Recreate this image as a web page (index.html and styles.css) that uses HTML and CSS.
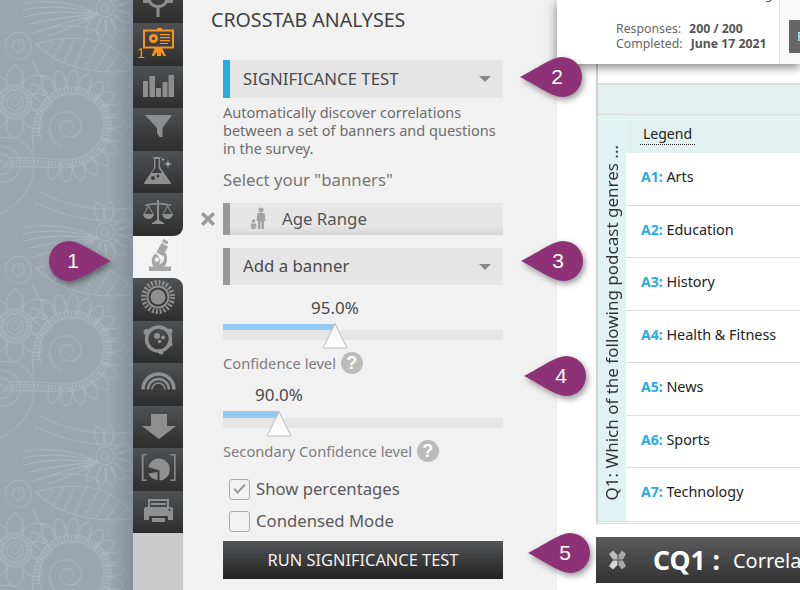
FILE: index.html
```html
<!DOCTYPE html>
<html lang="en">
<head>
<meta charset="utf-8">
<title>Crosstab Analyses</title>
<link rel="stylesheet" href="styles.css">
</head>
<body>
<div class="page">
  <div class="backdrop">
    <svg class="pattern" width="133" height="590" xmlns="http://www.w3.org/2000/svg">
      <defs>
        <path id="pa" d="M-6 -17C-11 -24 -8 -32 0 -37C8 -32 11 -24 6 -17"/>
        <path id="pb" d="M-4.500 -37C-7 -46 -5 -54 0 -56C5 -54 7 -46 4.500 -37"/>
        <path id="pc" d="M-3 -11C-6 -18 -5 -27 0 -31C5 -27 6 -18 3 -11"/>
        <g id="art" fill="none" stroke="#aab4bc" stroke-width="1.100">
          <g transform="translate(15 102)">
            <circle r="4"/><circle r="8"/><circle r="12"/><circle r="14.500" stroke-width="4" stroke-dasharray="1.300 2"/><circle r="17"/>
            <use href="#pa"/><use href="#pa" transform="rotate(45)"/><use href="#pa" transform="rotate(90)"/><use href="#pa" transform="rotate(135)"/>
            <use href="#pa" transform="rotate(180)"/><use href="#pa" transform="rotate(225)"/><use href="#pa" transform="rotate(270)"/><use href="#pa" transform="rotate(315)"/>
          </g>
          <g transform="translate(68 126)">
            <path d="M5 3C8 -3 0 -8 -5 -4C-11 1 -7 11 2 11C12 11 16 0 11 -8C5 -17 -10 -16 -16 -7C-22 3 -17 17 -5 21"/>
            <path d="M-26 16C-34 -4 -24 -28 0 -32C22 -35 37 -18 36 0C35 20 16 36 -6 34C-22 33 -40 30 -60 32"/>
            <path d="M-34 26C-40 -6 -24 -38 2 -39C28 -40 44 -20 43 1C42 26 18 43 -8 42C-24 41 -44 40 -66 41"/>
            <path d="M-30 10C-34 -12 -18 -34 1 -35.500C25 -37 41 -19 39.500 1C38 23 17 40 -7 38C-24 37 -42 35 -62 36.500" stroke-width="5" stroke-dasharray="1.300 2.200"/>
            <use href="#pb" transform="rotate(-42)"/><use href="#pb" transform="rotate(-26)"/><use href="#pb" transform="rotate(-10)"/><use href="#pb" transform="rotate(6)"/>
            <use href="#pb" transform="rotate(22)"/><use href="#pb" transform="rotate(38)"/><use href="#pb" transform="rotate(54)"/><use href="#pb" transform="rotate(70)"/>
            <use href="#pb" transform="rotate(86)"/><use href="#pb" transform="rotate(102)"/><use href="#pb" transform="rotate(118)"/><use href="#pb" transform="rotate(134)"/>
            <use href="#pb" transform="rotate(150)"/><use href="#pb" transform="rotate(166)"/><use href="#pb" transform="rotate(182)"/><use href="#pb" transform="rotate(198)"/>
          </g>
          <g transform="translate(105 8)">
            <circle r="4"/><circle r="9"/>
            <use href="#pc" transform="rotate(40)"/><use href="#pc" transform="rotate(65)"/><use href="#pc" transform="rotate(90)"/><use href="#pc" transform="rotate(115)"/>
            <use href="#pc" transform="rotate(140)"/><use href="#pc" transform="rotate(165)"/><use href="#pc" transform="rotate(190)"/><use href="#pc" transform="rotate(215)"/>
            <use href="#pc" transform="rotate(-15)"/><use href="#pc" transform="rotate(10)"/>
          </g>
          <path d="M99 14C78 4 50 -2 24 4M99 14C78 8 50 4 22 10M99 14C76 12 50 10 24 17M99 14C76 16 52 18 30 24M99 14C78 20 56 24 38 32M99 14C80 24 62 32 46 36"/>
          <path d="M99 14L88 10L90 16L84 20Z" fill="#aab4bc" fill-opacity=".5"/>
          <path d="M36 44C60 36 92 36 110 46C124 54 132 62 137 70C112 74 84 72 62 62C52 58 44 52 36 44Z"/>
          <path d="M46 52L54 41M54 57L64 38M64 62L76 37M74 66L88 37M84 69L100 40M95 71L110 46M106 72L120 52M116 72L128 60"/>
          <path d="M27 36C34 43 33 56 22 59C11 61 3 52 6 42C9 32 21 29 27 36ZM20 38C26 41 26 51 19 52C12 52 10 43 16 40C20 38 22 44 18 46"/>
          <path d="M32 34C54 24 84 22 100 34M33 60C36 70 38 74 47 80"/>
          <path d="M-1 146C14 146 22 156 20 168C18 178 8 184 -1 182M-1 154C8 153 13 160 12 167C11 172 5 175 -1 174M-1 161C4 160 6 164 5 167"/>
          <path d="M0 138C22 134 34 148 34 166C34 190 16 206 0 214"/>
          <path d="M34 202C62 216 94 224 134 220M40 192C66 206 98 212 134 208"/>
        </g>
        <linearGradient id="edge" x1="0" x2="1" y1="0" y2="0">
          <stop offset="0.82" stop-color="#6f7b86" stop-opacity="0"/>
          <stop offset="1" stop-color="#6f7b86" stop-opacity=".5"/>
        </linearGradient>
      </defs>
      <rect width="133" height="590" fill="#9ba6b0"/>
      <use href="#art" y="-224"/><use href="#art"/><use href="#art" y="224"/><use href="#art" y="448"/>
      <rect width="133" height="590" fill="url(#edge)"/>
    </svg>
  </div>

  <nav class="rail">
    <div class="tab tab-first">
      <svg class="ico" width="50" height="23" viewBox="0 0 50 23"><g fill="#8d8d8d"><path d="M16 0a9.500 9.500 0 0 0 18 0" fill="none" stroke="#8d8d8d" stroke-width="3"/><rect x="23.500" y="6" width="3" height="11"/><rect x="10" y="-2" width="8" height="5"/><rect x="32" y="-2" width="8" height="5"/></g></svg>
    </div>
    <div class="tab">
      <svg class="ico" width="50" height="42" viewBox="0 0 50 42">
        <g fill="#f7931e"><rect x="24" y="5" width="5" height="3"/><rect x="11" y="7.500" width="29" height="17" fill="none" stroke="#f7931e" stroke-width="2"/><circle cx="20.500" cy="15.500" r="4.500"/><circle cx="20.500" cy="15.500" r="1.600" fill="#3b3b3b"/><rect x="27" y="11" width="10" height="1.300"/><rect x="27" y="14" width="10" height="1.300"/><rect x="27" y="17" width="10" height="1.300"/><rect x="27" y="20" width="8" height="1"/><path d="M22 25h7l4 8h-2.500l-2.500-4v4h-2v-4v4h-2v-4l-3 4h-2.500z"/></g>
      </svg>
      <span class="tab-badge">1</span>
    </div>
    <div class="tab">
      <svg class="ico" width="50" height="42" viewBox="0 0 50 42"><g fill="#8d8d8d"><rect x="10" y="15" width="5" height="16"/><rect x="16.500" y="10" width="5.500" height="21"/><rect x="23" y="22" width="5" height="9"/><rect x="29.500" y="16" width="5" height="15"/><rect x="35.500" y="9" width="5.500" height="22"/></g></svg>
    </div>
    <div class="tab">
      <svg class="ico" width="50" height="42" viewBox="0 0 50 42"><path d="M12 7H39L29.500 20V29H26.500L24 25V20Z" fill="#8f8f8f"/></svg>
    </div>
    <div class="tab">
      <svg class="ico" width="50" height="42" viewBox="0 0 50 42"><path d="M20 6H28V7H27V16L38 32Q38 33 37 33H12Q11 33 11 32L21 17V7H20Z" fill="#8f8f8f"/><path d="M22.500 8H25.500V17L29 22H18.500L22.500 17Z" fill="#3d3d3d"/><circle cx="20" cy="27" r="2" fill="#3d3d3d"/><circle cx="25" cy="25" r="1.500" fill="#3d3d3d"/><path d="M35 9L36 12L39 13L36 14L35 17L34 14L31 13L34 12ZM30 6L30.500 8L32 8.500L30.500 9L30 11L29.500 9L28 8.500L29.500 8Z" fill="#a5a5a5"/></svg>
    </div>
    <div class="tab tab-before-active">
      <svg class="ico" width="50" height="42" viewBox="0 0 50 42"><g fill="#8f8f8f"><rect x="24" y="7" width="2" height="21"/><path d="M12 11.500Q25 8 38 11.500V13Q25 10 12 13Z"/><path d="M10 21H21Q20 26 15.500 26T10 21Z"/><path d="M29 21H40Q39 26 34.500 26T29 21Z"/><path d="M15.500 12L10.500 21H11.500L15.500 14L19.500 21H20.500Z"/><path d="M34.500 12L29.500 21H30.500L34.500 14L38.500 21H39.500Z"/><path d="M24 27H26L31 30V31H19V30Z"/></g></svg>
    </div>
    <div class="tab tab-active">
      <svg class="ico" width="50" height="42" viewBox="0 0 50 42"><g fill="#a6a6a6"><path d="M30.500 3L35.500 5.700L34 8.500L29 5.800Z"/><path d="M28.500 7L35 10.500L30 20L23.500 16.500Z"/><path d="M22.500 17.500C18 21 17.500 27 21 31H31C35 27 35 19 31.500 15.500L30.500 19.500C32 24 29.500 28 25.500 28.500C27 27 28 25 27 23L25 19.500Z"/><rect x="16" y="30.500" width="22" height="4.500"/><circle cx="24" cy="23.500" r="2.300" fill="#f3f3f3"/></g></svg>
    </div>
    <div class="tab tab-after-active">
      <svg class="ico" width="50" height="42" viewBox="0 0 50 42"><circle cx="25" cy="19" r="14.500" fill="none" stroke="#8f8f8f" stroke-width="5" stroke-dasharray="2 1.800"/><circle cx="25" cy="19" r="11.500" fill="#8f8f8f"/><circle cx="25" cy="19" r="9.500" fill="#3b3b3b"/><circle cx="25" cy="19" r="7.500" fill="#8f8f8f"/></svg>
    </div>
    <div class="tab">
      <svg class="ico" width="50" height="42" viewBox="0 0 50 42"><g fill="#8f8f8f"><circle cx="25.500" cy="18" r="12" fill="none" stroke="#8f8f8f" stroke-width="3.500"/><circle cx="13.500" cy="11" r="3"/><circle cx="37" cy="10" r="2.500"/><circle cx="37" cy="23" r="2.500"/><circle cx="28" cy="31" r="2.500"/><circle cx="24" cy="15" r="3"/><circle cx="30" cy="16.500" r="2"/><circle cx="26.500" cy="20.500" r="1.700"/></g></svg>
    </div>
    <div class="tab">
      <svg class="ico" width="50" height="42" viewBox="0 0 50 42"><g fill="none" stroke="#8f8f8f"><path d="M10 26.500a15.500 15.500 0 0 1 31 0" stroke-width="3.500"/><path d="M15 26.500a10.500 10.500 0 0 1 21 0" stroke-width="2.500"/><path d="M19 26.500a6.500 6.500 0 0 1 13 0" stroke-width="1.500"/></g></svg>
    </div>
    <div class="tab">
      <svg class="ico" width="50" height="42" viewBox="0 0 50 42"><path d="M18 8H34V20H43L26 33L9 20H18Z" fill="#8f8f8f"/></svg>
    </div>
    <div class="tab">
      <svg class="ico" width="50" height="42" viewBox="0 0 50 42"><g fill="#858585"><path d="M14 6H8.700V33H14V31.500H10.700V7.500H14Z"/><path d="M37 6H42.700V33H37V31.500H41V7.500H37Z"/></g><g fill="#8f8f8f"><path d="M26.500 22.500L15.200 19A11 11 0 1 1 26.500 32.500Z"/><path d="M24.500 24L15.500 25.500Q17.500 31 24.500 32Z"/></g></svg>
    </div>
    <div class="tab tab-last">
      <svg class="ico" width="50" height="42" viewBox="0 0 50 42"><g fill="#8f8f8f"><path d="M15 8H36V16H34V10H17V16H15Z"/><rect x="18" y="12" width="15" height="2"/><path d="M11 18Q11 16 13 16H38Q40 16 40 18V29H35V25H16V29H11Z"/><rect x="19" y="27" width="13" height="4"/></g><circle cx="36.500" cy="19" r="1" fill="#333"/></svg>
    </div>
    <div class="rail-rest"></div>
  </nav>

  <section class="panel">
    <h1 class="panel-title">CROSSTAB ANALYSES</h1>
    <div class="control">
      <div class="select select-accent"><span>SIGNIFICANCE TEST</span><i class="caret"></i></div>
      <p class="desc">Automatically discover correlations between a set of banners and questions in the survey.</p>
      <div class="banners-label">Select your "banners"</div>
      <div class="banner-wrap">
        <svg class="remove" width="16" height="16" viewBox="0 0 16 16"><path d="M3.500 1L8 5.500L12.500 1L15 3.500L10.500 8L15 12.500L12.500 15L8 10.500L3.500 15L1 12.500L5.500 8L1 3.500Z" fill="#999"/></svg>
        <div class="banner-chip">
          <svg width="18" height="22" viewBox="0 0 18 22"><g fill="#a3a3a3"><circle cx="11" cy="3" r="2.500"/><path d="M7.500 6H14.500L15.500 14H14V22H11.500V15H10.500V22H8V14H6.500Z"/><circle cx="3.500" cy="14" r="1.700"/><path d="M1 16.500H6L6.500 19.500H5.500V22H1.500V19.500H.500Z"/></g></svg>
          <span>Age Range</span>
        </div>
      </div>
      <div class="select select-plain"><span>Add a banner</span><i class="caret"></i></div>

      <div class="slider-block">
        <div class="slider-val"><span class="val val-a">95.0%</span></div>
        <div class="slider slider-a"><div class="fill"></div><svg class="thumb" width="26" height="26" viewBox="0 0 26 26"><defs><linearGradient id="th" x1="0" x2="0" y1="0" y2="1"><stop offset="0" stop-color="#f2f2f2"/><stop offset="1" stop-color="#fff"/></linearGradient></defs><path d="M13 .500L25 25H1Z" fill="url(#th)" stroke="#bdbdbd"/></svg></div>
        <div class="slider-label">Confidence level <i class="help">?</i></div>
      </div>
      <div class="slider-block slider-block-2">
        <div class="slider-val"><span class="val val-b">90.0%</span></div>
        <div class="slider slider-b"><div class="fill"></div><svg class="thumb" width="26" height="26" viewBox="0 0 26 26"><path d="M13 .500L25 25H1Z" fill="url(#th)" stroke="#bdbdbd"/></svg></div>
        <div class="slider-label">Secondary Confidence level <i class="help">?</i></div>
      </div>

      <label class="check check-first"><i class="box"><svg width="17" height="17" viewBox="0 0 17 17"><path d="M2.500 8.500L6.500 13L14.500 4.500L13 3L6.500 10L4 7Z" fill="#999"/></svg></i><span class="check-text">Show percentages</span></label>
      <label class="check"><i class="box"></i><span class="check-text">Condensed Mode</span></label>
      <button class="run">RUN SIGNIFICANCE TEST</button>
    </div>
  </section>

  <main class="main">
    <header class="card">
      <div class="card-info">
        <div class="card-cut"><i class="dot"></i><b>CREATED REPORT</b> Original</div>
        <div class="stat"><span>Responses:</span><b>200 / 200</b></div>
        <div class="stat"><span>Completed:</span><b>June 17 2021</b></div>
      </div>
      <div class="card-side"><div class="card-btn">P</div></div>
    </header>
    <div class="sheet">
      <div class="sheet-top"></div>
      <div class="sheet-band"></div>
      <div class="sheet-body">
        <div class="q-col"><span class="q-text">Q1: Which of the following podcast genres ...</span></div>
        <div class="rows">
          <div class="legend-row"><span class="legend">Legend</span></div>
          <div class="row"><b>A1:</b> Arts</div>
          <div class="row"><b>A2:</b> Education</div>
          <div class="row"><b>A3:</b> History</div>
          <div class="row"><b>A4:</b> Health &amp; Fitness</div>
          <div class="row"><b>A5:</b> News</div>
          <div class="row"><b>A6:</b> Sports</div>
          <div class="row row-last"><b>A7:</b> Technology</div>
        </div>
      </div>
    </div>
    <div class="cq-bar">
      <svg width="20" height="20" viewBox="0 0 20 20"><g fill="#bdbdbd"><path d="M1 4L5 0.500L9.500 5V9.500H5Z"/><path d="M18 4L14 0.500L10.500 5V9.500H15Z" fill="#a8a8a8"/><path d="M1 16L5 19.500L9.500 15V10.500H5Z" fill="#d8d8d8"/><path d="M18 16L14 19.500L10.500 15V10.500H15Z" fill="#a8a8a8"/></g></svg>
      <strong>CQ1 :</strong><span>Correlation</span>
    </div>
  </main>

  <div class="pin pin-r pin-1"><svg width="62" height="40" viewBox="0 0 62 40"><path d="M20 0C30 0 46 12 62 20C46 28 30 40 20 40A20 20 0 0 1 20 0Z"/></svg><span>1</span></div>
  <div class="pin pin-l pin-2"><svg width="62" height="40" viewBox="0 0 62 40"><path d="M42 0C32 0 16 12 0 20C16 28 32 40 42 40A20 20 0 0 0 42 0Z"/></svg><span>2</span></div>
  <div class="pin pin-l pin-3"><svg width="62" height="40" viewBox="0 0 62 40"><path d="M42 0C32 0 16 12 0 20C16 28 32 40 42 40A20 20 0 0 0 42 0Z"/></svg><span>3</span></div>
  <div class="pin pin-l pin-4"><svg width="62" height="40" viewBox="0 0 62 40"><path d="M42 0C32 0 16 12 0 20C16 28 32 40 42 40A20 20 0 0 0 42 0Z"/></svg><span>4</span></div>
  <div class="pin pin-l pin-5"><svg width="62" height="40" viewBox="0 0 62 40"><path d="M42 0C32 0 16 12 0 20C16 28 32 40 42 40A20 20 0 0 0 42 0Z"/></svg><span>5</span></div>
</div>
</body>
</html>
```

FILE: styles.css
```css
* { box-sizing: border-box; }
html, body { margin: 0; height: 100%; overflow: hidden; background: #fff; }
body { font-family: "Noto Sans", "Open Sans", sans-serif; color: #444; }
i { font-style: normal; }

.page { position: relative; display: flex; width: 800px; height: 590px; overflow: hidden; }

.backdrop { width: 133px; flex: none; }
.pattern { display: block; }

.rail { width: 50px; flex: none; display: flex; flex-direction: column; background: #f1f1f1; }
.tab { position: relative; height: 42.5px; flex: none; background: linear-gradient(#505153, #2d2d2d); }
.tab-first { height: 23px; background: linear-gradient(#3d3d3d, #2d2d2d); }
.tab-before-active { border-bottom-right-radius: 9px; }
.tab-after-active { border-top-right-radius: 9px; }
.tab-active { background: #f3f3f3; }
.ico { display: block; }
.tab-badge { position: absolute; left: 4px; top: 22px; font: 14px/16px "Liberation Sans", sans-serif; color: #f7931e; }
.rail-rest { flex: 1; background: #cbcbcb; }

.panel { width: 374px; flex: none; background: #f1f1f1; padding: 0 54px 0 28px; }
.panel-title { margin: 9px 0 0; font-size: 19.600px; line-height: 21px; font-weight: 400; color: #3f3f3f; white-space: nowrap; }
.control { margin: 30px 0 0 12px; width: 280px; }

.select { height: 38px; display: flex; align-items: center; justify-content: space-between; padding: 0 12px 0 13px; background: #e5e5e5; border-left: 7px solid #999; font-size: 16.800px; color: #4a4a4a; white-space: nowrap; }
.select span { position: relative; top: -1px; }
.select-accent { border-left-color: #29abe2; }
.caret { width: 0; height: 0; border: 6px solid transparent; border-top: 6px solid #888; border-bottom: 0; }

.desc { margin: 5px 0 0; font-size: 14.500px; line-height: 18px; color: #6d6d6d; }
.banners-label { margin: 12px 0 0; font-size: 16.800px; line-height: 22px; color: #777; white-space: nowrap; }

.banner-wrap { position: relative; margin-top: 12px; }
.remove { position: absolute; left: -23px; top: 8px; }
.banner-chip { height: 32px; display: flex; align-items: center; gap: 14px; padding-left: 20px; padding-bottom: 2px; border-left: 7px solid #999; background: linear-gradient(#e6e6e6 70%, #d6d6d6); font-size: 16.800px; color: #555; }

.select-plain { margin-top: 13px; height: 37px; }

.slider-block { margin-top: 12px; }
.slider-block-2 { margin-top: 10px; }
.slider-val { height: 22px; font-size: 17px; line-height: 22px; color: #4a4a4a; position: relative; }
.val { position: absolute; top: 0; transform: translateX(-50%); }
.val-a { left: 112px; }
.val-b { left: 56px; }
.slider { position: relative; height: 10px; margin-top: 11px; background: #e5e5e5; }
.slider-b { margin-top: 12px; }
.fill { position: absolute; left: 0; bottom: 100%; height: 6px; background: #90caf5; }
.slider-a .fill { width: 112px; }
.slider-b .fill { width: 56px; height: 7px; }
.thumb { position: absolute; top: -7px; }
.slider-a .thumb { left: 99px; }
.slider-b .thumb { left: 43px; }
.slider-label { margin-top: 12px; height: 22px; display: flex; align-items: center; gap: 1px; font-size: 14.700px; color: #7d7d7d; white-space: pre; }
.help { width: 22px; height: 22px; border-radius: 50%; background: #bbb; color: #fff; font: bold 18px/22px "Liberation Sans", sans-serif; text-align: center; }

.check { display: flex; align-items: center; height: 21px; margin: 11px 0 0 6px; gap: 6px; font-size: 16.700px; color: #5a5a5a; white-space: nowrap; }
.check-text { position: relative; top: -1px; }
.check-first { margin-top: 17px; }
.box { width: 21px; height: 21px; flex: none; border: 1px solid #aaa; border-radius: 3px; display: flex; align-items: center; justify-content: center; background: #f1f1f1; }
.run { display: block; width: 280px; height: 38px; margin-top: 9px; border: 0; padding: 0 0 2px; background: linear-gradient(#545557, #222); color: #f2f2f2; font-family: inherit; font-size: 16.400px; white-space: nowrap; }

.main { flex: 1; min-width: 0; background: #fff; position: relative; }
.card { position: relative; z-index: 2; height: 64px; display: flex; background: #fff; box-shadow: 0 3px 10px rgba(0,0,0,.5); }
.card-info { width: 222px; padding-left: 59px; font-size: 12.300px; line-height: 15px; color: #666; }
.card-cut { height: 16px; margin: -14px 0 19px; white-space: nowrap; line-height: 16px; color: #555; font-size: 13px; }
.dot { display: inline-block; width: 7px; height: 7px; border-radius: 50%; background: #f7931e; margin: 0 9px 0 0; }
.stat { display: flex; gap: 8px; white-space: nowrap; }
.stat b { color: #555; }
.card-side { flex: 1; min-width: 0; background: #f8f8f8; border-left: 1px solid #e2e2e2; padding: 20px 0 0 9px; }
.card-btn { height: 33px; background: #666; color: #eee; padding: 7px 0 0 8px; font-size: 13px; line-height: 18px; overflow: hidden; }

.sheet { margin-left: 39px; border-left: 2px solid #d0d0d0; border-bottom: 3px double #d8d8d8; }
.sheet-top { height: 19px; }
.sheet-band { height: 32px; background: #e0f1f0; border-top: 2px solid #ddd; border-bottom: 1px solid #d8d8d8; }
.sheet-body { display: flex; height: 406px; }
.q-col { width: 28px; flex: none; background: #e0f3f3; display: flex; align-items: flex-end; justify-content: center; padding-bottom: 20px; }
.q-text { writing-mode: vertical-rl; transform: rotate(180deg); font-size: 17px; line-height: 22px; color: #333; white-space: nowrap; }
.rows { flex: 1; }
.legend-row { height: 38px; background: #e0f1f0; padding: 10px 0 0 14px; font-size: 14px; line-height: 18px; color: #222; }
.legend { display: inline-block; padding: 0 3px 0 3px; height: 20px; border-bottom: 1px dotted #222; }
.row { height: 52.500px; border-bottom: 1px solid #ddd; padding: 14px 0 0 15px; font-size: 14.400px; line-height: 20px; color: #222; white-space: nowrap; }
.row-last { border-bottom: 0; }
.row b { color: #29abe2; font-size: 14px; }

.cq-bar { margin: 13px 0 0 39px; height: 46px; display: flex; align-items: center; padding-left: 12px; background: linear-gradient(#5a5a5a, #333); color: #fff; white-space: nowrap; overflow: hidden; }
.cq-bar svg { flex: none; }
.cq-bar strong { margin-left: 25px; font-size: 26.500px; flex: none; }
.cq-bar span { margin-left: 13px; font-size: 20px; flex: none; }

.pin { position: absolute; width: 62px; height: 40px; z-index: 5; }
.pin svg { display: block; fill: #8e3278; filter: drop-shadow(2px 3px 3px rgba(0,0,0,.4)); }
.pin span { position: absolute; top: 0; width: 40px; text-align: center; font: 21px/40px "Liberation Sans", sans-serif; color: #fff; }
.pin-r span { left: 4px; }
.pin-l span { left: 17px; }
.pin-1 { left: 49px; top: 241px; }
.pin-2 { left: 520px; top: 57px; }
.pin-3 { left: 521px; top: 241px; }
.pin-4 { left: 524px; top: 356px; }
.pin-5 { left: 528px; top: 533px; }
```
